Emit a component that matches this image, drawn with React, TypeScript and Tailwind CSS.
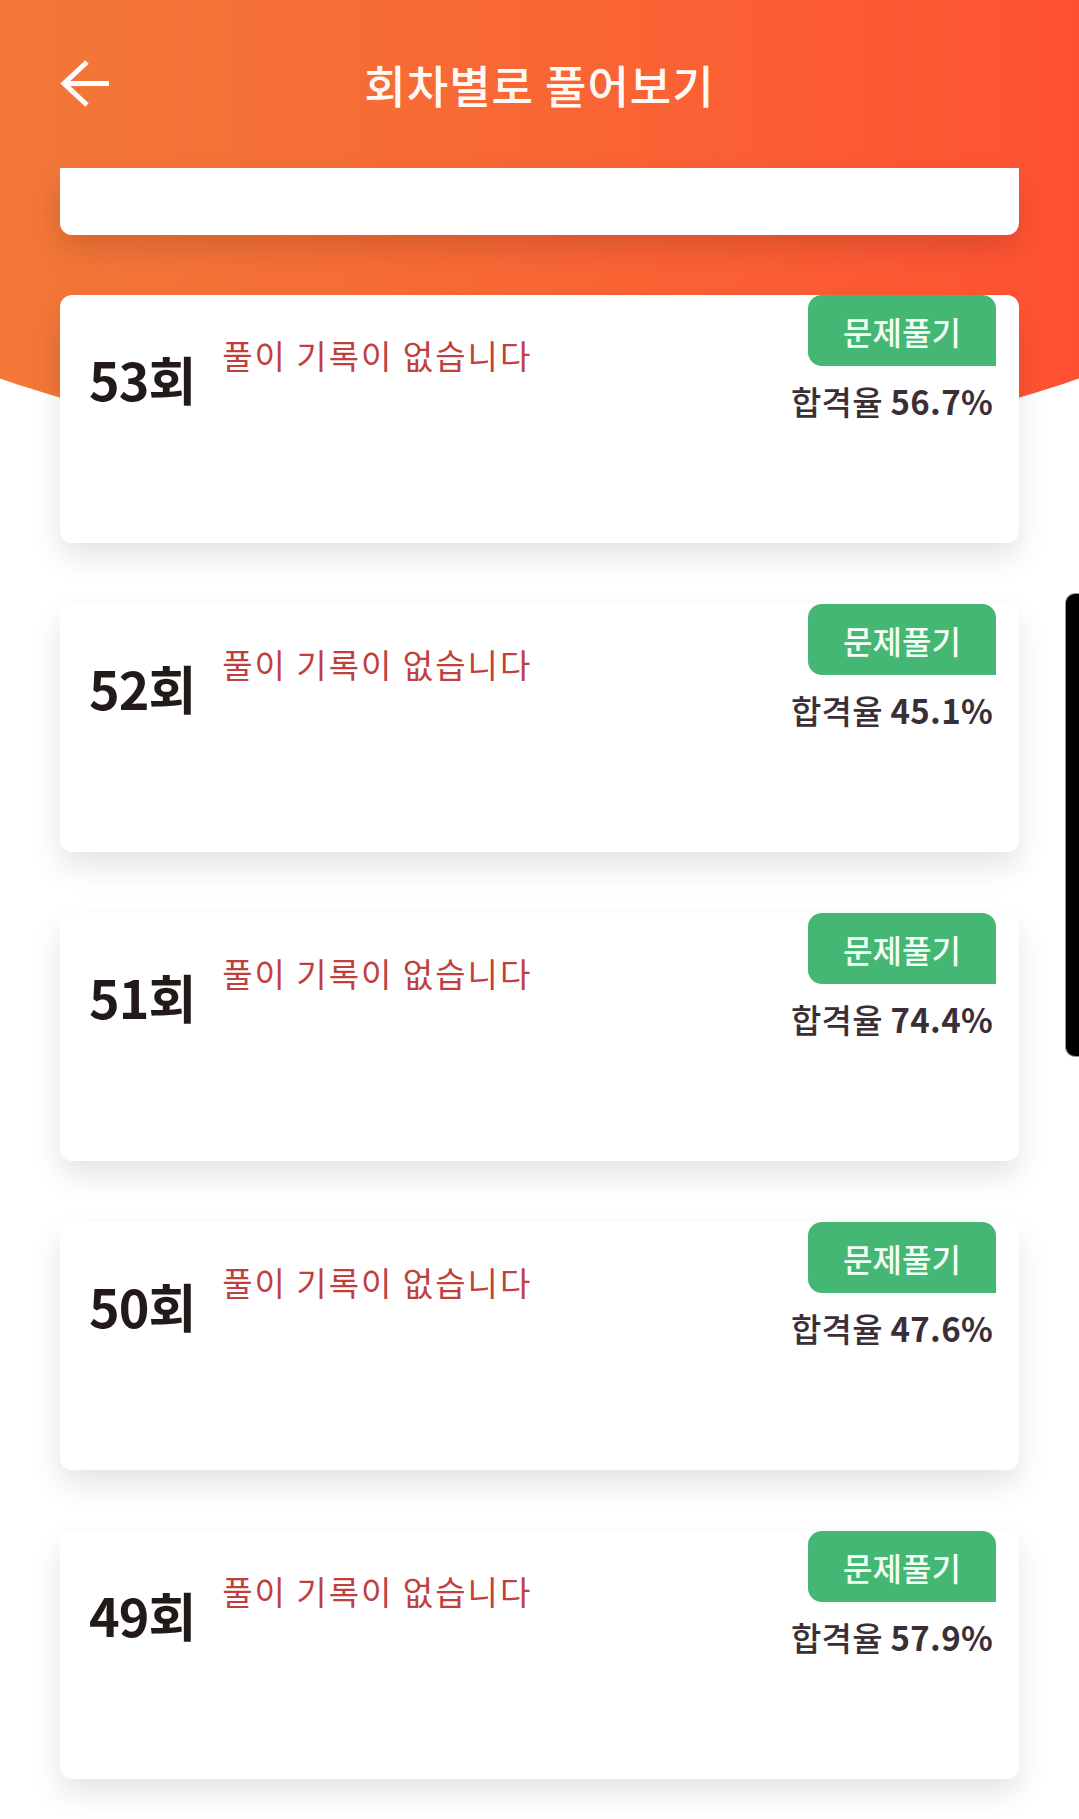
import React from "react";

const rounds = [
  { n: 53, rate: "56.7%" },
  { n: 52, rate: "45.1%" },
  { n: 51, rate: "74.4%" },
  { n: 50, rate: "47.6%" },
  { n: 49, rate: "57.9%" },
];

const font = { fontFamily: "'Noto Sans CJK KR', 'Noto Sans', sans-serif" };

function RoundCard({ n, rate }: { n: number; rate: string }) {
  return (
    <div className="h-[248px] w-full rounded-[12px] bg-white shadow-[0_14px_30px_rgba(0,0,0,0.11)] flex justify-between">
      <div className="flex items-start pl-[29px]">
        <div className="pt-[58px] text-[52px] leading-none font-bold tracking-[-1px] text-[#221a18]">
          {n}회
        </div>
        <div className="pt-[44px] ml-[27px] text-[33px] leading-none text-[#c0403e] tracking-[2px]">
          풀이 기록이 없습니다
        </div>
      </div>
      <div className="flex flex-col items-end pr-[23px]">
        <div className="w-[188px] h-[71px] bg-[#45b774] rounded-tl-[14px] rounded-tr-[14px] rounded-bl-[14px] flex items-center justify-center text-[32px] font-medium leading-none text-[#f3fff5]">
          문제풀기
        </div>
        <div className="mt-[19px] mr-[3px] text-[33px] leading-none text-[#3b2f37] whitespace-nowrap tracking-[0.3px]">
          <span className="font-medium">합격율</span> <span className="font-bold">{rate}</span>
        </div>
      </div>
    </div>
  );
}

export default function App() {
  return (
    <div className="relative w-full h-[1819px] overflow-hidden bg-white" style={font}>
      <div className="absolute left-0 top-0 w-full h-[540px] bg-gradient-to-r from-[#f27838] to-[#ff5132] [clip-path:ellipse(941px_462px_at_50%_0)]" />
      <div className="relative">
        <header className="h-[168px] grid grid-cols-[1fr_auto_1fr] items-center">
          <div className="pl-[58px] flex items-center">
            <svg width="52" height="52" viewBox="0 0 52 52" fill="none" stroke="#ffffff" strokeWidth="5">
              <path d="M5 25.5H51" />
              <path d="M29 4L6 25.5L29 47" strokeLinejoin="miter" />
            </svg>
          </div>
          <h1 className="text-[45px] font-medium leading-none text-[#fffaf5] tracking-[1px]">회차별로 풀어보기</h1>
          <div />
        </header>
        <div className="px-[60px] flex flex-col">
          <div className="h-[67px] w-full rounded-b-[12px] bg-white shadow-[0_14px_30px_rgba(0,0,0,0.13)]" />
          <div className="mt-[60px] flex flex-col gap-[61px]">
            {rounds.map((r) => (
              <RoundCard key={r.n} n={r.n} rate={r.rate} />
            ))}
          </div>
        </div>
      </div>
      <div className="absolute right-0 top-[593px] w-[14px] h-[464px] bg-black rounded-l-[10px] border border-r-0 border-[#9a9a9a]" />
    </div>
  );
}
